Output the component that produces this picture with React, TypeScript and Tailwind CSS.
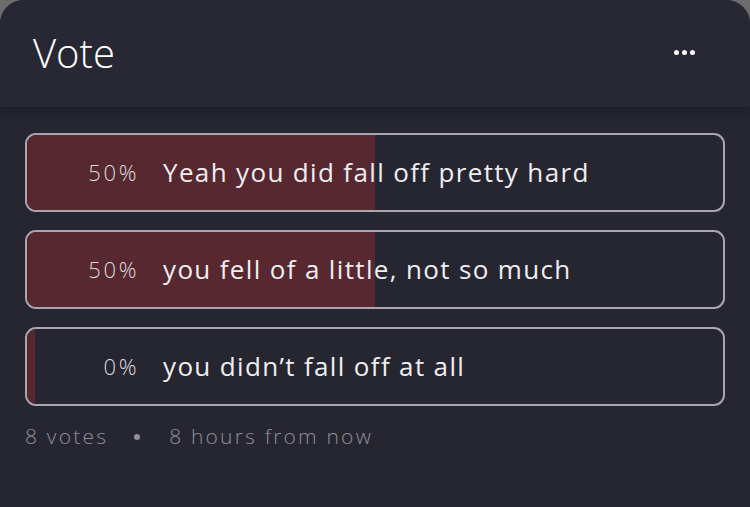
const options = [
  { pct: 50, label: "Yeah you did fall off pretty hard" },
  { pct: 50, label: "you fell of a little, not so much" },
  { pct: 0, label: "you didn’t fall off at all" },
];

// ===== Components =====
function PollOption({ pct, label }: { pct: number; label: string }) {
  return (
    <div className="relative h-[79px] rounded-[11px] border-2 border-[#a9a6b0] overflow-hidden flex items-center">
      {/* result bar, min width so 0% still shows a sliver */}
      <div
        className="absolute left-0 top-0 bottom-0 bg-[#572830] min-w-[8px]"
        style={{ width: `${pct}%` }}
      />
      <span className="relative w-[112px] text-right text-[22px] font-light text-[#dcdadf] tracking-[2.6px]">
        {pct}%
      </span>
      <span className="relative ml-[24px] text-[26px] font-normal text-[#efeef1] tracking-[1.35px]">
        {label}
      </span>
    </div>
  );
}

export default function App() {
  return (
    <div
      className="w-[750px] h-[507px] bg-[#6c6c6e] overflow-hidden"
      style={{ fontFamily: "'Open Sans', Lato, sans-serif" }}
    >
      <div className="h-full rounded-t-[24px] bg-[#262631] overflow-hidden flex flex-col">
        {/* Header */}
        <div className="h-[107px] shrink-0 bg-[#282834] flex items-center justify-between pl-[33px] pr-[55px] shadow-[0_4px_8px_rgba(0,0,0,0.25)] relative">
          <h1 className="text-[40px] font-light text-white leading-none -mt-[1px]">Vote</h1>
          <div className="flex gap-[3px] -mt-[2px]">
            <span className="w-[5px] h-[5px] rounded-full bg-white" />
            <span className="w-[5px] h-[5px] rounded-full bg-white" />
            <span className="w-[5px] h-[5px] rounded-full bg-white" />
          </div>
        </div>

        {/* Options */}
        <div className="pl-[25px] pr-[25px] pt-[26px] flex flex-col gap-[18px]">
          {options.map((o) => (
            <PollOption key={o.label} pct={o.pct} label={o.label} />
          ))}
        </div>

        {/* Footer */}
        <div className="pl-[25px] mt-[15px] flex items-center text-[21px] font-light text-[#8f8e98] tracking-[2.2px]">
          <span>8 votes</span>
          <span className="w-[6px] h-[6px] rounded-full bg-[#8f8e98] ml-[26px] mr-[29px]" />
          <span>8 hours from now</span>
        </div>
      </div>
    </div>
  );
}
